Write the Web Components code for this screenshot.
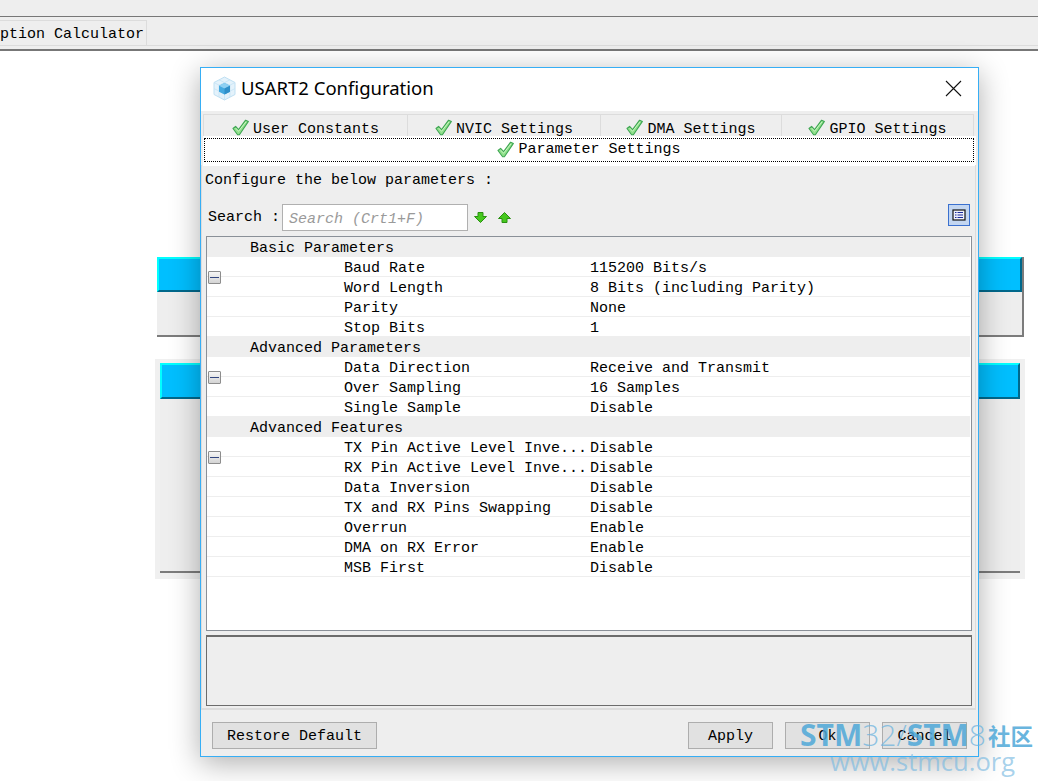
<!DOCTYPE html>
<html>
<head>
<meta charset="utf-8">
<title>USART2 Configuration</title>
<style>
html, body { margin: 0; height: 100%; background: #fff; }
body { position: relative; overflow: hidden; width: 1038px; height: 781px; font: 15px/20px "Liberation Mono", monospace; color: #000; }
</style>
</head>
<body>
<app-backdrop></app-backdrop>
<config-dialog heading="USART2 Configuration">
  <tab-row></tab-row>
  <settings-panel>
    <prop-table></prop-table>
  </settings-panel>
  <dialog-footer></dialog-footer>
</config-dialog>
<site-mark></site-mark>

<script>
// small helper, every element only sets its shadow html
class Base extends HTMLElement{
  constructor(){
    super();
    this.attachShadow({ mode: 'open' });
  }
  connectedCallback(){
    this.shadowRoot.innerHTML = this.html();
  }
}

class CheckIcon extends Base{
  html(){
    return `
    <style>
    :host{ display: inline-block; width: 17px; height: 17px; flex: none; }
    svg{ display: block; }
    </style>
    <svg width="17" height="17" viewBox="0 0 17 17">
      <path d="M1 9.5 L3.6 7.4 L6.6 10.6 L13.6 1.2 L16.4 2.4 L7.4 15.8 L5.6 15.8 Z"
        fill="#8fe08a" stroke="#3fa653" stroke-width="1.1" stroke-linejoin="round"/>
      <path d="M3.4 9 L6.6 12.2 L14 2.8" fill="none" stroke="#c9f5c2" stroke-width="1"/>
    </svg>`;
  }
}

class MinusBox extends Base{
  html(){
    return `
    <style>
    :host{ display: block; flex: none; }
    div{ width: 13px; height: 13px; box-sizing: border-box; border: 1px solid #8d8d8d; border-radius: 1px;
      background: linear-gradient(#f6f6f6, #d4d4d4); display: flex; align-items: center; justify-content: center; }
    i{ display: block; width: 9px; height: 1px; background: #33477f; }
    </style>
    <div><i></i></div>`;
  }
}

class AppBackdrop extends Base{
  html(){
    return `
    <style>
    :host{ display: block; }
    .top{ height: 16px; background: #eee; border-bottom: 1px solid #777; }
    .strip{ height: 32px; background: #eee; border-bottom: 2px solid #777; padding-top: 3px; box-sizing: border-box; height: 34px; }
    .bar{ height: 26px; box-sizing: border-box; border-bottom: 1px solid #dcdcdc; }
    .bar div{ height: 25px; width: 147px; box-sizing: border-box; border: 1px solid #dcdcdc; border-left: 0; border-bottom: 0; line-height: 27px; white-space: nowrap; }
    .one{ margin: 206px 14px 0 157px; height: 80px; background: #eee; box-sizing: border-box; border-right: 2px solid #7c7c7c; border-bottom: 2px solid #7c7c7c; }
    .hd{ height: 35px; box-sizing: border-box; background: #00bfff; border-top: 2px solid #0ff; border-left: 2px solid #0ff; border-right: 2px solid #00688b; border-bottom: 2px solid #00688b; }
    .two{ margin: 22px 13px 0 155px; height: 220px; box-sizing: border-box; background: #f0f0f0; padding: 4px 5px 5px 5px; }
    .two .body{ height: 210px; background: #eee; border-bottom: 2px solid #7c7c7c; box-sizing: border-box; }
    .two .hd{ height: 36px; }
    </style>
    <div class="top"></div>
    <div class="strip"><div class="bar"><div>ption Calculator</div></div></div>
    <div class="one"><div class="hd"></div></div>
    <div class="two"><div class="body"><div class="hd"></div></div></div>`;
  }
}

class ConfigDialog extends Base{
  html(){
    return `
    <style>
    :host{ position: absolute; left: 200px; top: 67px; width: 779px; height: 690px; box-sizing: border-box;
      border: 1px solid #36aef5; background: #eee; display: flex; flex-direction: column;
      box-shadow: 0 6px 28px rgba(0,0,0,.32); }
    .title{ height: 43px; flex: none; background: #fff; display: flex; align-items: center; padding: 0 16px 0 11px; gap: 4px; }
    .title span{ font: 18.5px/24px "Noto Sans", sans-serif; flex: 1; color: #000; margin-top: -3px; }
    svg{ display: block; flex: none; margin-top: -3px; }
    </style>
    <div class="title">
      <svg width="25" height="25" viewBox="0 0 25 25">
        <path d="M12.5 1 L23 6.5 V18.5 L12.5 24 L2 18.5 V6.5 Z" fill="#e4f2fb" stroke="#bfe0f3"/>
        <path d="M2 6.5 L12.5 12 L23 6.5 M12.5 12 V24 M7 3.8 L18 9.3 M18 3.8 L7 9.3 M7 9 V21 M18 9 V21 M2 12.5 L12.5 18 L23 12.5" fill="none" stroke="#c5e3f5" stroke-width=".8"/>
        <path d="M12.5 7 L18 9.8 V15.8 L12.5 18.6 L7 15.8 V9.8 Z" fill="#45a9e0"/>
        <path d="M12.5 7 L18 9.8 L12.5 12.6 L7 9.8 Z" fill="#8fd0f2"/>
        <path d="M12.5 12.6 L18 9.8 V15.8 L12.5 18.6 Z" fill="#2f8fc9"/>
      </svg>
      <span>${this.getAttribute('heading')}</span>
      <svg width="17" height="17" viewBox="0 0 17 17">
        <path d="M1 1 L16 16 M16 1 L1 16" stroke="#111" stroke-width="1.1" fill="none"/>
      </svg>
    </div>
    <slot></slot>`;
  }
}

class TabRow extends Base{
  html(){
    const tabs = ['User Constants', 'NVIC Settings', 'DMA Settings', 'GPIO Settings'];
    return `
    <style>
    :host{ display: block; flex: none; margin: 3px 4px 0 2px; }
    .row{ display: grid; grid-template-columns: 203px 193px 181px 192px; height: 22px; box-sizing: border-box;
      border-top: 1px solid #dcdcdc; border-left: 1px solid #dcdcdc; border-right: 1px solid #dcdcdc; overflow: hidden; }
    .tab{ display: flex; justify-content: center; gap: 4px; padding-top: 4px; height: 30px; border-left: 1px solid #dcdcdc; white-space: nowrap; }
    .tab:first-child{ border-left: 0; }
    .tab span{ line-height: 22px; }
    .sel{ margin: 0 -2px 0 0; height: 30px; box-sizing: border-box; background: #fff; padding: 2px 2px 4px 1px; }
    .sel div{ height: 24px; box-sizing: border-box; border: 1px dotted #000; display: flex; justify-content: center; align-items: center; gap: 4px; }
    .sel span{ line-height: 22px; }
    .sel check-icon{ margin-top: -2px; }
    </style>
    <div class="row">
      ${tabs.map(t => `<div class="tab"><check-icon></check-icon><span>${t}</span></div>`).join('')}
    </div>
    <div class="sel"><div><check-icon></check-icon><span>Parameter Settings</span></div></div>`;
  }
}

class SettingsPanel extends Base{
  html(){
    return `
    <style>
    :host{ display: block; flex: none; height: 545px; box-sizing: border-box; margin: -1px 2px 0 0;
      border-left: 1px solid #dcdcdc; border-right: 1px solid #dcdcdc; border-bottom: 2px solid #dcdcdc; padding: 4px 3px 0 4px; }
    .cfg{ height: 20px; line-height: 24px; margin-left: -1px; white-space: pre; }
    .search{ height: 27px; margin-top: 15px; display: flex; align-items: center; white-space: pre; padding-left: 2px; }
    .search span{ line-height: 24px; margin-top: 4px; height: 27px; }
    .box{ width: 186px; height: 27px; box-sizing: border-box; margin-left: 2px; border: 1px solid #b0b0b0; background: #fff;
      color: #9a9a9a; font-style: italic; padding-left: 6px; line-height: 29px; }
    .down{ margin-left: 6px; }
    .up{ margin-left: 11px; }
    .view{ margin: -5px 2px 0 auto; width: 22px; height: 22px; box-sizing: border-box; border: 1px solid #3a70cf; background: #c3d6f1;
      display: flex; align-items: center; justify-content: center; }
    .desc{ height: 71px; box-sizing: border-box; margin-top: 4px; border: 1px solid #6c6c6c; border-top-width: 2px; background: #eee; }
    svg{ display: block; }
    </style>
    <div class="cfg">Configure the below parameters :</div>
    <div class="search">
      <span>Search :</span>
      <div class="box">Search (Crt1+F)</div>
      <svg class="down" width="13" height="11" viewBox="0 0 13 11"><path d="M4 .5 H9 V4.5 H12.5 L6.5 10.5 L.5 4.5 H4 Z" fill="#46c81e" stroke="#2a8f12"/></svg>
      <svg class="up" width="13" height="11" viewBox="0 0 13 11"><path d="M4 10.5 H9 V6.5 H12.5 L6.5 .5 L.5 6.5 H4 Z" fill="#46c81e" stroke="#2a8f12"/></svg>
      <div class="view">
        <svg width="14" height="12" viewBox="0 0 14 12">
          <rect x="1" y="1" width="12" height="10" fill="#eef0fb" stroke="#111" stroke-width="1.2"/>
          <path d="M3 3.5 H4.5 M5.5 3.5 H11 M3 6 H4.5 M5.5 6 H11 M3 8.5 H4.5 M5.5 8.5 H11" stroke="#1a2a9a" fill="none"/>
        </svg>
      </div>
    </div>
    <slot></slot>
    <div class="desc"></div>`;
  }
}

class PropTable extends Base{
  html(){
    const data = [
      ['Basic Parameters', [
        ['Baud Rate', '115200 Bits/s'],
        ['Word Length', '8 Bits (including Parity)'],
        ['Parity', 'None'],
        ['Stop Bits', '1']]],
      ['Advanced Parameters', [
        ['Data Direction', 'Receive and Transmit'],
        ['Over Sampling', '16 Samples'],
        ['Single Sample', 'Disable']]],
      ['Advanced Features', [
        ['TX Pin Active Level Inve...', 'Disable'],
        ['RX Pin Active Level Inve...', 'Disable'],
        ['Data Inversion', 'Disable'],
        ['TX and RX Pins Swapping', 'Disable'],
        ['Overrun', 'Enable'],
        ['DMA on RX Error', 'Enable'],
        ['MSB First', 'Disable']]]
    ];
    return `
    <style>
    :host{ display: block; height: 395px; margin-top: 5px; box-sizing: border-box; border: 1px solid #8a9098; background: #fff; }
    .grp{ height: 20px; background: #eee; display: flex; align-items: center; gap: 6px; padding-left: 1px; margin-right: 1px; white-space: pre; }
    .grp span{ height: 20px; line-height: 24px; }
    .row{ height: 20px; box-sizing: border-box; display: grid; grid-template-columns: 246px 1fr; padding-left: 137px;
      border-bottom: 1px solid #eee; margin-right: 1px; line-height: 24px; white-space: pre; }
    .row span{ height: 19px; }
    </style>
    ${data.map(g => `
      <div class="grp"><minus-box></minus-box><span>${g[0]}</span></div>
      ${g[1].map(r => `<div class="row"><span>${r[0]}</span><span>${r[1]}</span></div>`).join('')}
    `).join('')}`;
  }
}

class PushButton extends Base{
  html(){
    return `
    <style>
    :host{ display: block; width: var(--w, 85px); }
    div{ height: 27px; box-sizing: border-box; border: 1px solid #adadad; background: #e1e1e1;
      text-align: center; line-height: 28px; white-space: pre; }
    </style>
    <div><slot></slot></div>`;
  }
}

class DialogFooter extends Base{
  html(){
    return `
    <style>
    :host{ display: flex; flex: none; padding: 12px 11px 0 11px; gap: 12px; }
    .rest{ --w: 165px; margin-right: auto; }
    </style>
    <push-button class="rest">Restore Default</push-button>
    <push-button>Apply</push-button>
    <push-button>Ok</push-button>
    <push-button>Cancel</push-button>`;
  }
}

class SiteMark extends Base{
  html(){
    return `
    <style>
    :host{ position: absolute; left: 800px; top: 719px; width: 238px; pointer-events: none; white-space: nowrap; }
    .a{ font: 700 30px/32px "Open Sans", "Noto Sans CJK SC", sans-serif; color: rgba(78,168,216,.85); display: flex; }
    .a i{ font-style: normal; font-weight: 300; color: rgba(110,180,222,.75); }
    .a b{ font-weight: 700; }
    .a em{ font: 700 22.5px/32px "Noto Sans CJK SC", sans-serif; font-style: normal; margin-left: 2px; }
    .b{ font: 400 25.5px/24px "Open Sans", sans-serif; color: rgba(120,185,225,.65); margin: -2px 0 0 30px; }
    </style>
    <div class="a"><b>STM</b><i>32/</i><b>STM</b><i>8</i><em>社区</em></div>
    <div class="b">www.stmcu.org</div>`;
  }
}

customElements.define('check-icon', CheckIcon);
customElements.define('minus-box', MinusBox);
customElements.define('app-backdrop', AppBackdrop);
customElements.define('config-dialog', ConfigDialog);
customElements.define('tab-row', TabRow);
customElements.define('settings-panel', SettingsPanel);
customElements.define('prop-table', PropTable);
customElements.define('push-button', PushButton);
customElements.define('dialog-footer', DialogFooter);
customElements.define('site-mark', SiteMark);
</script>
</body>
</html>
